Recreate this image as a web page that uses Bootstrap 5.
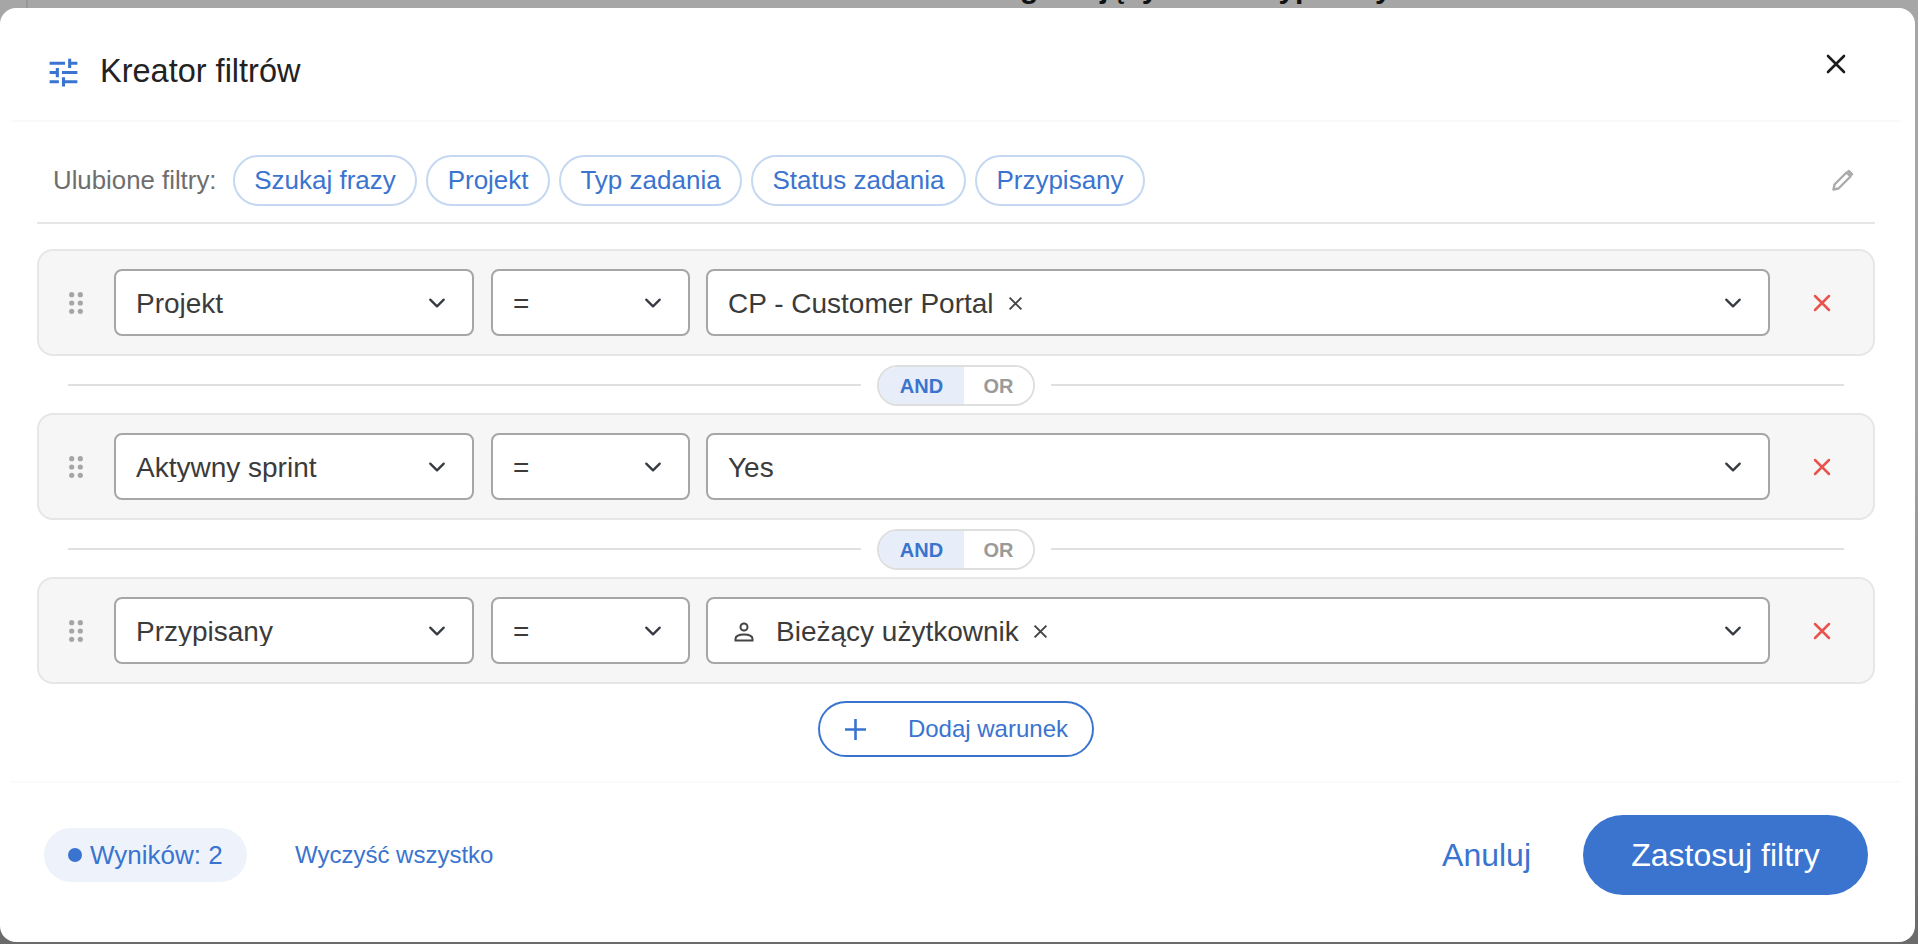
<!DOCTYPE html>
<html lang="pl">
<head>
  <meta charset="UTF-8" />
  <meta name="viewport" content="width=device-width, initial-scale=1.0"/>
  <title>Kreator filtrów</title>
  <link href="https://cdn.jsdelivr.net/npm/bootstrap@5.3.0/dist/css/bootstrap.min.css" rel="stylesheet" crossorigin="anonymous" />
  <style>
    html, body { height: 100%; }
    body {
      font-family: "Liberation Sans", Arial, sans-serif;
      background: linear-gradient(#a6a6a6 0, #a6a6a6 45%, #6a6a6a 100%);
      overflow: hidden;
      padding: 8px 3px 2px 0;
      position: relative;
    }
    .back-title {
      position: absolute; top: -27px; left: 1020px; line-height: 30px;
      font-size: 30px; font-weight: 700; color: #111; white-space: nowrap;
    }
    .back-rail { position: absolute; top: 0; left: 26px; width: 2px; height: 8px; background: #969696; }
    .sheet {
      position: relative;
      height: 934px;
      border: 0;
      border-radius: 16px;
      background: #fff;
    }
    .sheet .modal-header {
      height: 114px;
      padding: 0 54px 0 38px;
      margin: 0 15px 0 12px;
      border-bottom: 2px solid #f9f9f9;
      align-items: flex-start;
    }
    .sheet-title { font-size: 32.5px; font-weight: 400; color: #222; margin: 0; line-height: 34px; padding-top: 46px; }
    .head-icon { width: 37px; height: 37px; margin: 46px 18px 0 -5px; flex: none; }
    .close-x { background: none; border: 0; padding: 0; margin: 46px 0 0 0; line-height: 0; }
    .sheet .modal-body { padding: 0 40px 0 37px; flex: 0 0 auto; height: 659px; }
    .fav-row { height: 102px; border-bottom: 2px solid #e6e6e6; padding: 16px 21px 0 16px; }
    .fav-label { font-size: 25.8px; color: #6e6e6e; margin-right: 16.5px; }
    .fav-chip {
      height: 51px; border: 2px solid #c5d8f2; border-radius: 26px; background: #fff;
      color: #3a74cf; font-size: 26px; padding: 0 19.2px; margin-right: 9.5px; line-height: 1;
    }
    .cond-row {
      height: 107px; margin-top: 25px; padding: 0 0 0 30px;
      background: #f6f6f6; border: 2px solid #e6e6e6; border-radius: 16px;
    }
    .cond-row.no-gap { margin-top: 0; }
    .grip { width: 14px; height: 22px; flex: none; margin-right: 31px; display: block; }
    .cond-row .form-select {
      height: 67px; font-size: 28px; color: #3b3b3b; line-height: 1;
      border: 2px solid #a6a6a6; border-radius: 8px; padding: 2px 40px 0 20px;
      box-shadow: none;
      background-size: 18px 18px; background-position: right 26px center;
    }
    .sel-field { width: 360px; flex: none; margin-right: 17px; }
    .sel-op { width: 199px; flex: none; margin-right: 16px; }
    .sel-val { flex: 1 1 auto; display: flex; align-items: center; }
    .tag-x { width: 15px; height: 15px; margin-left: 14px; flex: none; }
    .user-ico { width: 20px; height: 20px; margin: 0 22px 0 6px; flex: none; }
    .del-x { background: none; border: 0; padding: 0; margin: 0 42px 0 43px; line-height: 0; flex: none; }
    .joiner { height: 57px; padding: 0 31px; }
    .joiner hr { flex: 1 1 0; margin: 0; border: 0; border-top: 2px solid #e0e0e0; opacity: 1; }
    .logic-group {
      width: 158px; height: 41px; margin: 9px 16px 7px; border: 2px solid #dedede; border-radius: 21px; overflow: hidden;
      flex: none; font-size: 20px; font-weight: 700;
    }
    .logic-group span { display: flex; align-items: center; justify-content: center; }
    .logic-and { width: 85px; background: #e7eef9; color: #3a74cf; }
    .logic-or { flex: 1; background: #fff; color: #9a9a9a; }
    .add-cond {
      width: 276px; height: 56px; margin: 17px auto 0; border: 2px solid #3a74cf; border-radius: 28px; background: #fff;
      color: #3a74cf; font-size: 24px; padding: 0 24px 0 25px; line-height: 1;
    }
    .sheet .modal-footer {
      height: 161px;
      padding: 32px 33px 0 34px; margin: 0 14px 0 10px;
      border-top: 2px solid #fafafa; align-items: flex-start; flex-wrap: nowrap;
    }
    .sheet .modal-footer > * { margin: 0; }
    .count-pill {
      height: 54px; width: 203px; margin-top: 13px !important; border-radius: 27px; background: #eef3fb; color: #3a74cf; font-size: 26px;
      padding-left: 24px;
    }
    .count-dot { width: 14px; height: 14px; border-radius: 50%; background: #3a74cf; margin-right: 8px; flex: none; }
    .clear-link { color: #3a74cf; font-size: 24px; text-decoration: none; margin: 24px 0 0 48px !important; line-height: 32px; }
    .btn-cancel { color: #3a74cf; font-size: 32px; background: none; border: 0; padding: 0; margin: 20px 52px 0 auto !important; line-height: 40px; }
    .btn-apply {
      width: 285px; height: 80px; border-radius: 40px; background: #3a74cf; color: #fff; border: 0; font-size: 32px; padding: 0;
    }
  </style>
</head>
<body>
  <div class="back-title">głosujący wobec typ dany</div>
  <div class="back-rail"></div>

  <div class="modal-content sheet">
    <div class="modal-header d-flex">
      <svg class="head-icon" viewBox="0 0 24 24" fill="#3a74cf"><path d="M3 17v2h6v-2H3zM3 5v2h10V5H3zm10 16v-2h8v-2h-8v-2h-2v6h2zM7 9v2H3v2h4v2h2V9H7zm14 4v-2H11v2h10zm-6-4h2V7h4V5h-4V3h-2v6z"/></svg>
      <h5 class="sheet-title flex-grow-1">Kreator filtrów</h5>
      <button type="button" class="close-x" aria-label="Zamknij">
        <svg width="20" height="20" viewBox="0 0 20 20" stroke="#1c1c1c" stroke-width="2.600" stroke-linecap="round"><path d="M2 2l16 16M18 2L2 18"/></svg>
      </button>
    </div>

    <div class="modal-body">
      <div class="fav-row d-flex align-items-center">
        <span class="fav-label">Ulubione filtry:</span>
        <button class="fav-chip">Szukaj frazy</button>
        <button class="fav-chip">Projekt</button>
        <button class="fav-chip">Typ zadania</button>
        <button class="fav-chip">Status zadania</button>
        <button class="fav-chip">Przypisany</button>
        <svg class="ms-auto" width="22" height="22" viewBox="0 0 22 22" fill="#ababab" stroke="#ababab" stroke-width="2.400" stroke-linejoin="round"><path fill="none" d="M1.500 20.500l1-5L14.500 3.500l4 4-12 12z"/><path stroke-width="1" d="M15 2.500l2-1.500 4 4-1.500 2z"/></svg>
      </div>

      <div class="cond-row d-flex align-items-center">
        <svg class="grip" viewBox="0 0 14 22" fill="#a6a6a6"><circle cx="2.700" cy="2.700" r="2.600"/><circle cx="11.300" cy="2.700" r="2.600"/><circle cx="2.700" cy="11" r="2.600"/><circle cx="11.300" cy="11" r="2.600"/><circle cx="2.700" cy="19.300" r="2.600"/><circle cx="11.300" cy="19.300" r="2.600"/></svg>
        <select class="form-select sel-field"><option>Projekt</option></select>
        <select class="form-select sel-op"><option>=</option></select>
        <div class="form-select sel-val">CP - Customer Portal
          <svg class="tag-x" viewBox="0 0 14 14" stroke="#444" stroke-width="1.800"><path d="M1.500 1.500l11 11M12.500 1.500l-11 11"/></svg>
        </div>
        <button class="del-x" aria-label="Usuń">
          <svg width="18" height="18" viewBox="0 0 18 18" stroke="#e8544d" stroke-width="2.500" stroke-linecap="round"><path d="M2 2l14 14M16 2L2 16"/></svg>
        </button>
      </div>

      <div class="joiner d-flex align-items-center">
        <hr>
        <div class="logic-group d-flex"><span class="logic-and">AND</span><span class="logic-or">OR</span></div>
        <hr>
      </div>

      <div class="cond-row no-gap d-flex align-items-center">
        <svg class="grip" viewBox="0 0 14 22" fill="#a6a6a6"><circle cx="2.700" cy="2.700" r="2.600"/><circle cx="11.300" cy="2.700" r="2.600"/><circle cx="2.700" cy="11" r="2.600"/><circle cx="11.300" cy="11" r="2.600"/><circle cx="2.700" cy="19.300" r="2.600"/><circle cx="11.300" cy="19.300" r="2.600"/></svg>
        <select class="form-select sel-field"><option>Aktywny sprint</option></select>
        <select class="form-select sel-op"><option>=</option></select>
        <div class="form-select sel-val">Yes</div>
        <button class="del-x" aria-label="Usuń">
          <svg width="18" height="18" viewBox="0 0 18 18" stroke="#e8544d" stroke-width="2.500" stroke-linecap="round"><path d="M2 2l14 14M16 2L2 16"/></svg>
        </button>
      </div>

      <div class="joiner d-flex align-items-center">
        <hr>
        <div class="logic-group d-flex"><span class="logic-and">AND</span><span class="logic-or">OR</span></div>
        <hr>
      </div>

      <div class="cond-row no-gap d-flex align-items-center">
        <svg class="grip" viewBox="0 0 14 22" fill="#a6a6a6"><circle cx="2.700" cy="2.700" r="2.600"/><circle cx="11.300" cy="2.700" r="2.600"/><circle cx="2.700" cy="11" r="2.600"/><circle cx="11.300" cy="11" r="2.600"/><circle cx="2.700" cy="19.300" r="2.600"/><circle cx="11.300" cy="19.300" r="2.600"/></svg>
        <select class="form-select sel-field"><option>Przypisany</option></select>
        <select class="form-select sel-op"><option>=</option></select>
        <div class="form-select sel-val">
          <svg class="user-ico" viewBox="0 0 20 20" fill="none" stroke="#444" stroke-width="2"><circle cx="10" cy="5" r="3.500"/><path d="M1.500 18.500v-1.500c0-3 4-4.500 8.500-4.500s8.500 1.500 8.500 4.500v1.500z"/></svg>
          Bieżący użytkownik
          <svg class="tag-x" viewBox="0 0 14 14" stroke="#444" stroke-width="1.800"><path d="M1.500 1.500l11 11M12.500 1.500l-11 11"/></svg>
        </div>
        <button class="del-x" aria-label="Usuń">
          <svg width="18" height="18" viewBox="0 0 18 18" stroke="#e8544d" stroke-width="2.500" stroke-linecap="round"><path d="M2 2l14 14M16 2L2 16"/></svg>
        </button>
      </div>

      <button class="add-cond d-flex align-items-center">
        <svg width="21" height="21" viewBox="0 0 21 21" stroke="#3a74cf" stroke-width="2.600"><path d="M10.500 0v21M0 10.500h21"/></svg>
        <span class="ms-auto">Dodaj warunek</span>
      </button>
    </div>

    <div class="modal-footer d-flex">
      <div class="count-pill d-flex align-items-center"><span class="count-dot"></span>Wyników: 2</div>
      <a href="#" class="clear-link">Wyczyść wszystko</a>
      <button class="btn-cancel">Anuluj</button>
      <button class="btn-apply">Zastosuj filtry</button>
    </div>
  </div>

  <script src="https://cdn.jsdelivr.net/npm/bootstrap@5.3.0/dist/js/bootstrap.bundle.min.js" crossorigin="anonymous"></script>
</body>
</html>
